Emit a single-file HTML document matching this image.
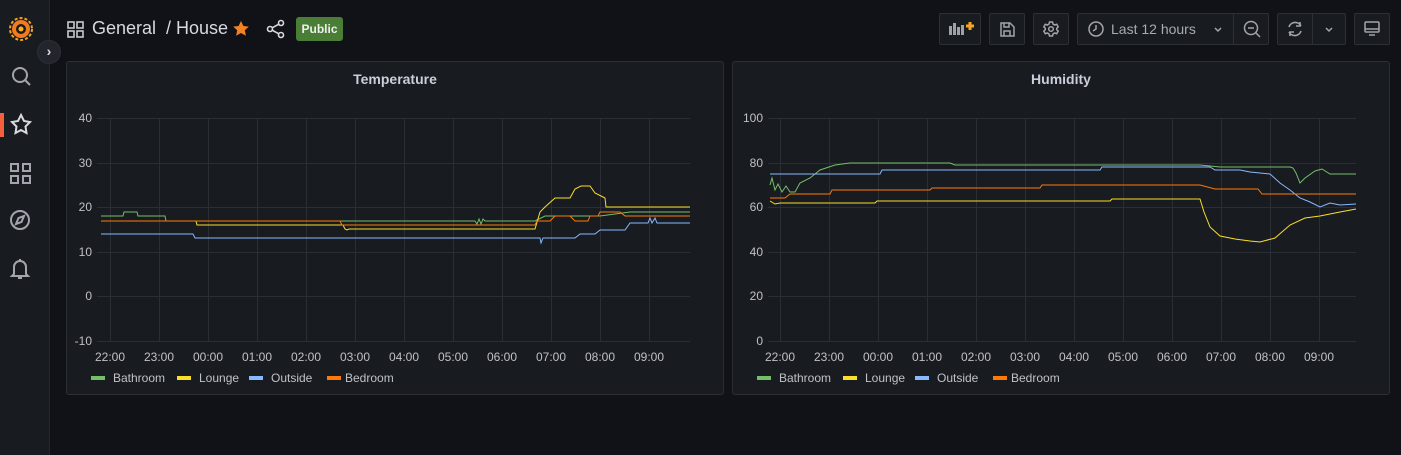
<!DOCTYPE html>
<html><head><meta charset="utf-8"><style>
*{box-sizing:border-box;margin:0;padding:0}
body{width:1401px;height:455px;background:#111217;font-family:"Liberation Sans",sans-serif;color:#ccccdc;position:relative;overflow:hidden}
.side{position:absolute;left:0;top:0;width:50px;height:455px;background:#181b1f;border-right:1px solid #25272d}
.btn{position:absolute;top:13px;height:32px;background:#181b1f;border:1px solid #2c2f36;border-radius:2px}
.panel{position:absolute;top:61px;height:334px;background:#181b1f;border:1px solid #2a2d33;border-radius:3px}
.ptitle{position:absolute;top:9px;width:100%;text-align:center;font-size:14px;font-weight:bold;color:#ccccdc}
svg text{font-family:"Liberation Sans",sans-serif}
</style></head><body>
<div class="side">
<svg width="50" height="300" style="position:absolute;left:0;top:0">
 <g transform="translate(21,29)">
  <circle r="9" fill="#f37a1f"/><circle r="11" fill="none" stroke="#f6a21e" stroke-width="2" stroke-dasharray="3 2"/>
  <circle r="5" fill="#181b1f"/><circle r="2.5" fill="#f9b21e"/>
 </g>
 <g fill="none" stroke="#a3a4ad" stroke-width="2">
  <circle cx="20" cy="75" r="7"/><path d="M25 80l5 5"/>
  <path d="M21 115l3 6 6 1-4.5 4.5 1 6.5-5.5-3-5.5 3 1-6.5-4.5-4.5 6-1z" stroke="#d8d9e0"/>
  <rect x="11" y="164" width="7" height="7"/><rect x="23" y="164" width="7" height="7"/><rect x="11" y="176" width="7" height="7"/><rect x="23" y="176" width="7" height="7"/>
  <circle cx="20" cy="220" r="9"/><path d="M24 216l-2.5 6-5.5 2 2.5-6z"/>
  <path d="M14 274v-7a6 6 0 0 1 12 0v7l2 2h-16z M18 278h4 M20 259v2"/>
 </g>
 <rect x="0" y="113" width="4" height="24" fill="#f55f3e"/>
</svg>
</div>
<div style="position:absolute;left:37px;top:40px;width:24px;height:24px;border-radius:12px;background:#22252b;border:1px solid #2c2f36;color:#ddd;font-size:14px;text-align:center;line-height:21px;font-weight:bold">›</div>
<svg width="20" height="20" style="position:absolute;left:66px;top:20px" fill="none" stroke="#c8c9d0" stroke-width="1.6"><rect x="2" y="2" width="6" height="6"/><rect x="11" y="2" width="6" height="6"/><rect x="2" y="11" width="6" height="6"/><rect x="11" y="11" width="6" height="6"/></svg>
<div style="position:absolute;left:92px;top:18px;font-size:18px;color:#d8d9e0">General &nbsp;/ House</div>
<svg width="18" height="18" style="position:absolute;left:232px;top:20px"><path d="M9 1l2.4 5 5.4.6-4 3.7 1.1 5.4L9 13 4.1 15.7l1.1-5.4-4-3.7 5.4-.6z" fill="#f58220"/></svg>
<svg width="20" height="20" style="position:absolute;left:266px;top:19px" fill="none" stroke="#d8d9e0" stroke-width="1.6"><circle cx="4" cy="10" r="2.5"/><circle cx="15" cy="4" r="2.5"/><circle cx="15" cy="16" r="2.5"/><path d="M6.2 8.8l6.6-3.6M6.2 11.2l6.6 3.6"/></svg>
<div style="position:absolute;left:296px;top:17px;width:47px;height:24px;background:#4a7e36;border-radius:3px;color:#eee;font-size:12px;font-weight:bold;text-align:center;line-height:24px">Public</div>

<div class="btn" style="left:939px;width:42px"><svg width="42" height="30"><g fill="#9fa1a8"><rect x="9" y="12" width="3" height="9"/><rect x="13" y="9" width="3" height="12"/><rect x="17" y="13" width="3" height="8"/><rect x="21" y="11" width="3" height="10"/></g><path d="M26 12h8M30 8v8" stroke="#f5a623" stroke-width="3"/></svg></div>
<div class="btn" style="left:989px;width:36px"><svg width="34" height="30" fill="none" stroke="#a3a4ad" stroke-width="1.5"><path d="M11 9h9l4 4v9h-13z M14 9v4h5V9 M14 22v-5h6v5"/></svg></div>
<div class="btn" style="left:1033px;width:36px"><svg width="34" height="30" fill="none" stroke="#a3a4ad" stroke-width="1.5"><circle cx="17" cy="15" r="2.3"/><path d="M15.5 8h3l.5 2 1.7 1 2-.7 1.5 2.6-1.5 1.4v1.4l1.5 1.4-1.5 2.6-2-.7-1.7 1-.5 2h-3l-.5-2-1.7-1-2 .7-1.5-2.6 1.5-1.4v-1.4l-1.5-1.4 1.5-2.6 2 .7 1.7-1z"/></svg></div>
<div class="btn" style="left:1077px;width:192px">
 <svg width="20" height="20" style="position:absolute;left:8px;top:5px" fill="none" stroke="#a3a4ad" stroke-width="1.5"><circle cx="10" cy="10" r="7"/><path d="M10 6v4l-3 2"/></svg>
 <div style="position:absolute;left:33px;top:7px;font-size:14px;color:#a9abb4">Last 12 hours</div>
 <svg width="12" height="12" style="position:absolute;left:134px;top:10px" fill="none" stroke="#a3a4ad" stroke-width="1.5"><path d="M3 4l3 3 3-3"/></svg>
 <div style="position:absolute;left:155px;top:0;width:1px;height:30px;background:#2c2f36"></div>
 <svg width="22" height="22" style="position:absolute;left:163px;top:4px" fill="none" stroke="#a3a4ad" stroke-width="1.5"><circle cx="10" cy="10" r="6.5"/><path d="M7 10h6M15 15l4 4"/></svg>
</div>
<div class="btn" style="left:1277px;width:69px">
 <svg width="22" height="22" style="position:absolute;left:6px;top:4px" fill="none" stroke="#a3a4ad" stroke-width="1.6"><path d="M5 9a6.5 6.5 0 0 1 12-1M17 13a6.5 6.5 0 0 1-12 1M16 4v4h-4M6 18v-4h4"/></svg>
 <div style="position:absolute;left:34px;top:0;width:1px;height:30px;background:#2c2f36"></div>
 <svg width="12" height="12" style="position:absolute;left:45px;top:10px" fill="none" stroke="#a3a4ad" stroke-width="1.5"><path d="M3 4l3 3 3-3"/></svg>
</div>
<div class="btn" style="left:1354px;width:36px"><svg width="34" height="30" fill="none" stroke="#a3a4ad" stroke-width="1.5"><rect x="10" y="8" width="14" height="10" rx="1"/><path d="M10 15h14M14 21h6"/></svg></div>

<div class="panel" style="left:66px;width:658px"><div class="ptitle">Temperature</div></div>
<div class="panel" style="left:732px;width:658px"><div class="ptitle">Humidity</div></div>

<svg width="1401" height="455" style="position:absolute;left:0;top:0" font-size="12">
 <g stroke="#2b2e34" stroke-width="1">
  <path d="M97 118.5H690M97 163.5H690M97 207.5H690M97 252.5H690M97 296.5H690M97 341.5H690"/>
  <path d="M110.5 118v223M159.5 118v223M208.5 118v223M257.5 118v223M306.5 118v223M355.5 118v223M404.5 118v223M453.5 118v223M502.5 118v223M551.5 118v223M600.5 118v223M649.5 118v223"/>
  <path d="M768 118.5H1356M768 163.5H1356M768 207.5H1356M768 252.5H1356M768 296.5H1356M768 341.5H1356"/>
  <path d="M780.5 118v223M829.5 118v223M878.5 118v223M927.5 118v223M976.5 118v223M1025.5 118v223M1074.5 118v223M1123.5 118v223M1172.5 118v223M1221.5 118v223M1270.5 118v223M1319.5 118v223"/>
 </g>
 <g fill="#c0c1c8" text-anchor="end">
  <text x="92" y="122">40</text><text x="92" y="167">30</text><text x="92" y="211">20</text><text x="92" y="256">10</text><text x="92" y="300">0</text><text x="92" y="345">-10</text>
  <text x="763" y="122">100</text><text x="763" y="167">80</text><text x="763" y="211">60</text><text x="763" y="256">40</text><text x="763" y="300">20</text><text x="763" y="345">0</text>
 </g>
 <g fill="#c0c1c8" text-anchor="middle">
  <text x="110" y="361">22:00</text><text x="159" y="361">23:00</text><text x="208" y="361">00:00</text><text x="257" y="361">01:00</text><text x="306" y="361">02:00</text><text x="355" y="361">03:00</text><text x="404" y="361">04:00</text><text x="453" y="361">05:00</text><text x="502" y="361">06:00</text><text x="551" y="361">07:00</text><text x="600" y="361">08:00</text><text x="649" y="361">09:00</text>
  <text x="780" y="361">22:00</text><text x="829" y="361">23:00</text><text x="878" y="361">00:00</text><text x="927" y="361">01:00</text><text x="976" y="361">02:00</text><text x="1025" y="361">03:00</text><text x="1074" y="361">04:00</text><text x="1123" y="361">05:00</text><text x="1172" y="361">06:00</text><text x="1221" y="361">07:00</text><text x="1270" y="361">08:00</text><text x="1319" y="361">09:00</text>
 </g>
 <g fill="none" stroke-width="1">
  <polyline stroke="#73bf69" points="101,216 123,216 124,212 137,212 138,216 165,216 166,221 475,221 477,224 479,219 481,224 483,219 485,221 535,221 545,216 600,216 630,212 690,212"/>
  <polyline stroke="#fade2a" points="101,221 196,221 197,225 343,225 345,229 347,230 349,229 535,229 540,212 545,207 555,198 570,198 575,189 581,186 590,186 595,193 605,198 606,207 690,207"/>
  <polyline stroke="#8ab8ff" points="101,234 193,234 195,238 540,238 541,243 543,238 575,238 580,234 595,234 600,230 625,230 630,223 648,223 650,218 652,223 655,218 657,223 690,223"/>
  <polyline stroke="#ff780a" points="101,221 340,221 342,225 535,225 537,221 550,221 555,216 570,216 575,221 588,221 590,216 598,216 600,212 620,212 625,216 690,216"/>

  <polyline stroke="#73bf69" points="770,185 772,178 775,190 778,184 782,192 786,186 790,192 795,192 800,183 810,178 820,170 835,165 850,163 950,163 955,165 1200,165 1220,167 1290,167 1293,168 1296,173 1300,183 1305,178 1315,171 1322,169 1330,174 1356,174"/>
  <polyline stroke="#fade2a" points="770,201 775,204 780,203 875,203 877,201 1110,201 1112,199 1200,199 1204,212 1210,227 1220,236 1235,239 1250,241 1260,242 1275,238 1290,225 1305,218 1320,216 1340,212 1356,209"/>
  <polyline stroke="#8ab8ff" points="770,174 880,174 882,170 1100,170 1102,167 1210,167 1215,170 1240,170 1250,172 1270,174 1280,183 1290,190 1300,198 1310,202 1320,207 1330,203 1340,205 1356,204"/>
  <polyline stroke="#ff780a" points="770,198 785,198 790,194 830,194 832,190 930,190 932,188 1040,188 1042,185 1200,185 1215,189 1258,189 1262,194 1356,194"/>
 </g>
 <g>
  <rect x="91" y="376" width="14" height="4" fill="#73bf69"/><rect x="177" y="376" width="14" height="4" fill="#fade2a"/><rect x="249" y="376" width="14" height="4" fill="#8ab8ff"/><rect x="327" y="376" width="14" height="4" fill="#ff780a"/>
  <rect x="757" y="376" width="14" height="4" fill="#73bf69"/><rect x="843" y="376" width="14" height="4" fill="#fade2a"/><rect x="915" y="376" width="14" height="4" fill="#8ab8ff"/><rect x="993" y="376" width="14" height="4" fill="#ff780a"/>
 </g>
 <g fill="#c0c1c8">
  <text x="113" y="382">Bathroom</text><text x="199" y="382">Lounge</text><text x="271" y="382">Outside</text><text x="345" y="382">Bedroom</text>
  <text x="779" y="382">Bathroom</text><text x="865" y="382">Lounge</text><text x="937" y="382">Outside</text><text x="1011" y="382">Bedroom</text>
 </g>
</svg>
</body></html>
